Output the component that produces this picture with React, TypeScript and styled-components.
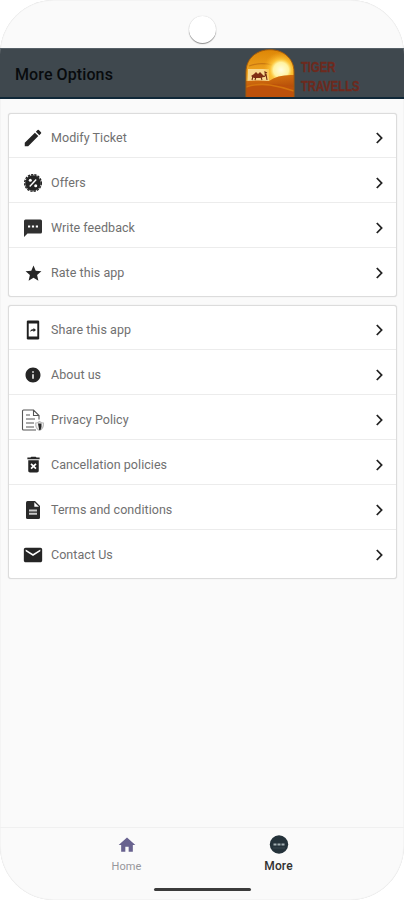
import React from 'react';
import styled, { createGlobalStyle } from 'styled-components';
import {
  MdEdit, MdStar, MdInfo, MdDeleteForever, MdEmail, MdHome,
} from 'react-icons/md';

const GlobalStyle = createGlobalStyle`
  * { box-sizing: border-box; }
  body { margin: 0; background: #fff; font-family: Roboto, "Liberation Sans", sans-serif; }
`;

const Phone = styled.main`
  position: relative;
  display: flex;
  flex-direction: column;
  width: 404px;
  height: 900px;
  overflow: hidden;
  background: #fafafa;
  border-radius: 54px;
  box-shadow: inset 0 0 1px #c4c4c4;
`;

const StatusBar = styled.div`
  display: flex;
  justify-content: center;
  height: 48px;
  padding: 16px 0 0 1px;
`;

const Camera = styled.div`
  width: 27px;
  height: 27px;
  border-radius: 50%;
  background: #fff;
  box-shadow: 0 1px 1px #8c8c8c, 0 0 1px #c8c8c8;
`;

const Header = styled.header`
  display: flex;
  align-items: center;
  flex: none;
  height: 51px;
  padding-left: 15px;
  border-top: 1px solid #566067;
  border-bottom: 2px solid #102838;
  background: #3f484e;
`;

const Title = styled.h1`
  width: 230px;
  margin: 0;
  padding-top: 3px;
  font-size: 16px;
  font-weight: 500;
  line-height: 20px;
  letter-spacing: 0.1px;
  color: #080b0d;
`;

const Brand = styled.div`
  display: flex;
  align-items: center;
  gap: 6px;
`;

const BrandName = styled.div`
  width: 62px;
  padding-top: 7px;
  font: 700 15px/18.5px "Liberation Sans", sans-serif;
  color: #6d2a1e;
  -webkit-text-stroke: 0.4px #6d2a1e;
  white-space: pre;
  transform: scaleX(0.75);
  transform-origin: left;
`;

const Content = styled.div`
  display: flex;
  flex: 1;
  flex-direction: column;
  gap: 8px;
  padding: 14px 7px 0 8px;
`;

const Card = styled.section`
  padding-bottom: 2px;
  border: 1px solid #dcdcdc;
  border-radius: 3px;
  background: #fff;
  box-shadow: 0 0 1px #d2d2d2;
`;

const Row = styled.div`
  display: grid;
  grid-template-columns: 24px 1fr 20px;
  align-items: center;
  column-gap: 6px;
  height: 45px;
  padding: 5px 7px 0 12px;
  border-bottom: 1px solid #ececec;
  color: #252525;
  &:first-child { height: 44px; }
  &:last-child { height: 46px; border-bottom: 0; padding-bottom: 1px; }
`;

const IconSlot = styled.span`
  display: flex;
  align-items: center;
  justify-content: center;
  height: 24px;
`;

const Label = styled.span`
  font-size: 12.5px;
  line-height: 16px;
  letter-spacing: 0.05px;
  color: #707070;
`;

const BottomNav = styled.nav`
  display: grid;
  grid-template-columns: 152px 152px;
  justify-content: center;
  flex: none;
  height: 73px;
  padding: 5px 0 0 1px;
  border-top: 1px solid #f0f0f0;
`;

const Tab = styled.div<{ $active?: boolean }>`
  display: flex;
  flex-direction: column;
  align-items: center;
  font-size: ${p => (p.$active ? '12px' : '11px')};
  line-height: 15px;
  letter-spacing: 0.15px;
  font-weight: ${p => (p.$active ? 500 : 400)};
  color: ${p => (p.$active ? '#303030' : '#96969b')};
`;

const TabIcon = styled.span`
  display: flex;
  align-items: center;
  justify-content: center;
  height: 24px;
  margin-bottom: 2px;
  color: #68628f;
`;

const HomeIndicator = styled.div`
  position: absolute;
  bottom: 9px;
  left: 154px;
  width: 97px;
  height: 3px;
  border-radius: 2px;
  background: #3b3b3b;
`;

const Sunset = () => (
  <svg width="50" height="48" viewBox="0 0 50 48">
    <defs>
      <linearGradient id="sky" x2="0" y2="1">
        <stop stopColor="#dd8505" />
        <stop offset=".5" stopColor="#efa522" />
        <stop offset=".7" stopColor="#f3c65b" />
      </linearGradient>
      <radialGradient id="glow">
        <stop stopColor="#fffde0" />
        <stop offset=".42" stopColor="#fff3a2" />
        <stop offset=".6" stopColor="#ffc93b" stopOpacity=".85" />
        <stop offset="1" stopColor="#f6a81c" stopOpacity="0" />
      </radialGradient>
      <linearGradient id="sand" x2=".3" y2="1">
        <stop stopColor="#df7b10" />
        <stop offset="1" stopColor="#a84008" />
      </linearGradient>
      <clipPath id="arch"><path d="M1 48V23C1 9 12 .7 25 .7S49 9 49 23v25Z" /></clipPath>
    </defs>
    <g clipPath="url(#arch)">
      <path fill="url(#sky)" d="M0 0h50v48H0Z" />
      <path d="M4 17q11-4 23-1" fill="none" stroke="#c97912" strokeWidth="1.3" />
      <path fill="#f8d991" d="M3 20h21v12H3Z" />
      <circle cx="36" cy="21" r="18" fill="url(#glow)" />
      <path fill="url(#sand)" d="M0 32q15-1 24 0 9-7 26-6v22H0Z" />
      <path fill="#bd510b" d="M1 38q24-6 49 0v10H1Z" />
      <path d="M1 38q12-4 24-2t24 6" fill="none" stroke="#d5740d" strokeWidth="1.6" />
      <path fill="#802e13" d="m6 27 3-2 2-2 2 2 2-2 3 3 1 2-4 1H9Z" />
      <path d="m8 27-1 4m4-3-1 3m6-3 1 3m1-4q3 2 2-4l2 1m-1 1 1 6" fill="none" stroke="#702a13" strokeWidth="1.1" />
    </g>
    <path d="M1 48V23C1 9 12 .7 25 .7S49 9 49 23v25" fill="none" stroke="#a45b0b" />
  </svg>
);

const OfferIcon = () => (
  <svg width="20" height="20" viewBox="0 0 20 20">
    <circle cx="10" cy="10" r="7.8" fill="#242424" />
    <circle cx="10" cy="10" r="8.3" fill="none" stroke="#242424" strokeWidth="1.5" strokeDasharray="2.3 1.05" />
    <path d="m6.7 13.5 6.5-7" stroke="#fff" strokeWidth="1.4" />
    <circle cx="7.3" cy="7.3" r="1.5" fill="#fff" />
    <circle cx="12.7" cy="12.7" r="1.5" fill="#fff" />
  </svg>
);

const FeedbackIcon = () => (
  <svg width="20" height="20" viewBox="0 0 20 20">
    <path fill="#303030" d="M2.5 1.5h15q1.5 0 1.5 1.5v11q0 1.5-1.5 1.5H4.5L1 19V3q0-1.5 1.5-1.5Z" />
    <path d="M5 8.5h2.2m1.7 0h2.2m1.7 0H15" stroke="#fff" strokeWidth="2" />
  </svg>
);

const DocumentIcon = () => (
  <svg width="16" height="20" viewBox="0 0 16 20">
    <path fill="#292929" d="M2.5 1H10l5 5v11.5q0 1.5-1.5 1.5h-11Q1 19 1 17.5v-15Q1 1 2.5 1Z" />
    <path fill="#fff" d="M9.3 2.2v4.5H14Z" />
    <path fill="#c9c9c9" d="M4 9.5h8v2H4Zm0 3.2h8v2H4Z" />
  </svg>
);

const ShareIcon = () => (
  <svg width="14" height="20" viewBox="0 0 14 20">
    <rect x=".8" y=".5" width="12.4" height="19" rx="1.2" fill="#1f1f1f" />
    <path fill="#fff" d="M2.7 3.5h8.6v13H2.7Z" />
    <path d="M4.5 12v-1.2q0-1.5 2-1.5h1V7.9l2.5 2.1-2.5 2.1v-1.4h-1q-1.3 0-2 1.3Z" fill="#222" />
  </svg>
);

const PrivacyIcon = () => (
  <svg width="24" height="24" viewBox="0 0 24 24" fill="none" stroke="#555" strokeWidth="1.1">
    <path d="M15 22H2.5q-1 0-1-1V3q0-1 1-1h10l5.5 5.5v4M12.5 2v5.5H18M5 7h4m-4 4h9m-9 4h8m-8 4h8" />
    <path d="M18.5 13.5q2 1.7 4 1.5.3 5.5-4 7.5-4.2-2-3.8-7.5 2.1.2 3.8-1.5Z" stroke="#bbb" fill="#f5f5f5" />
    <path d="M17 15.5h3.5V19l-1 3h-1.3Z" fill="#262626" stroke="none" />
  </svg>
);

const Chevron = () => (
  <svg width="20" height="20" viewBox="0 0 20 20">
    <path d="m7.8 5 4.8 5-4.8 5" fill="none" stroke="#222" strokeWidth="1.8" />
  </svg>
);

const MoreIcon = () => (
  <svg width="20" height="20" viewBox="0 0 20 20">
    <circle cx="10" cy="9.5" r="9.2" fill="#24323a" />
    <path d="M4.5 9.5h3m1 0h3m1 0h3" stroke="#a2aeb2" strokeWidth="2" />
    <path d="M4 13h12" stroke="#43525a" strokeWidth=".7" />
  </svg>
);

const groups = [
  [
    { label: 'Modify Ticket', icon: <MdEdit size={22} /> },
    { label: 'Offers', icon: <OfferIcon /> },
    { label: 'Write feedback', icon: <FeedbackIcon /> },
    { label: 'Rate this app', icon: <MdStar size={19} /> },
  ],
  [
    { label: 'Share this app', icon: <ShareIcon /> },
    { label: 'About us', icon: <MdInfo size={18} /> },
    { label: 'Privacy Policy', icon: <PrivacyIcon /> },
    { label: 'Cancellation policies', icon: <MdDeleteForever size={21} /> },
    { label: 'Terms and conditions', icon: <DocumentIcon /> },
    { label: 'Contact Us', icon: <MdEmail size={22} /> },
  ],
];

export default function App() {
  return (
    <>
      <GlobalStyle />
      <Phone>
        <StatusBar><Camera /></StatusBar>
        <Header>
          <Title>More Options</Title>
          <Brand>
            <Sunset />
            <BrandName>{'TIGER\nTRAVELLS'}</BrandName>
          </Brand>
        </Header>
        <Content>
          {groups.map((rows, i) => (
            <Card key={i}>
              {rows.map(row => (
                <Row key={row.label}>
                  <IconSlot>{row.icon}</IconSlot>
                  <Label>{row.label}</Label>
                  <Chevron />
                </Row>
              ))}
            </Card>
          ))}
        </Content>
        <BottomNav>
          <Tab>
            <TabIcon><MdHome size={20} /></TabIcon>
            Home
          </Tab>
          <Tab $active>
            <TabIcon><MoreIcon /></TabIcon>
            More
          </Tab>
        </BottomNav>
        <HomeIndicator />
      </Phone>
    </>
  );
}
